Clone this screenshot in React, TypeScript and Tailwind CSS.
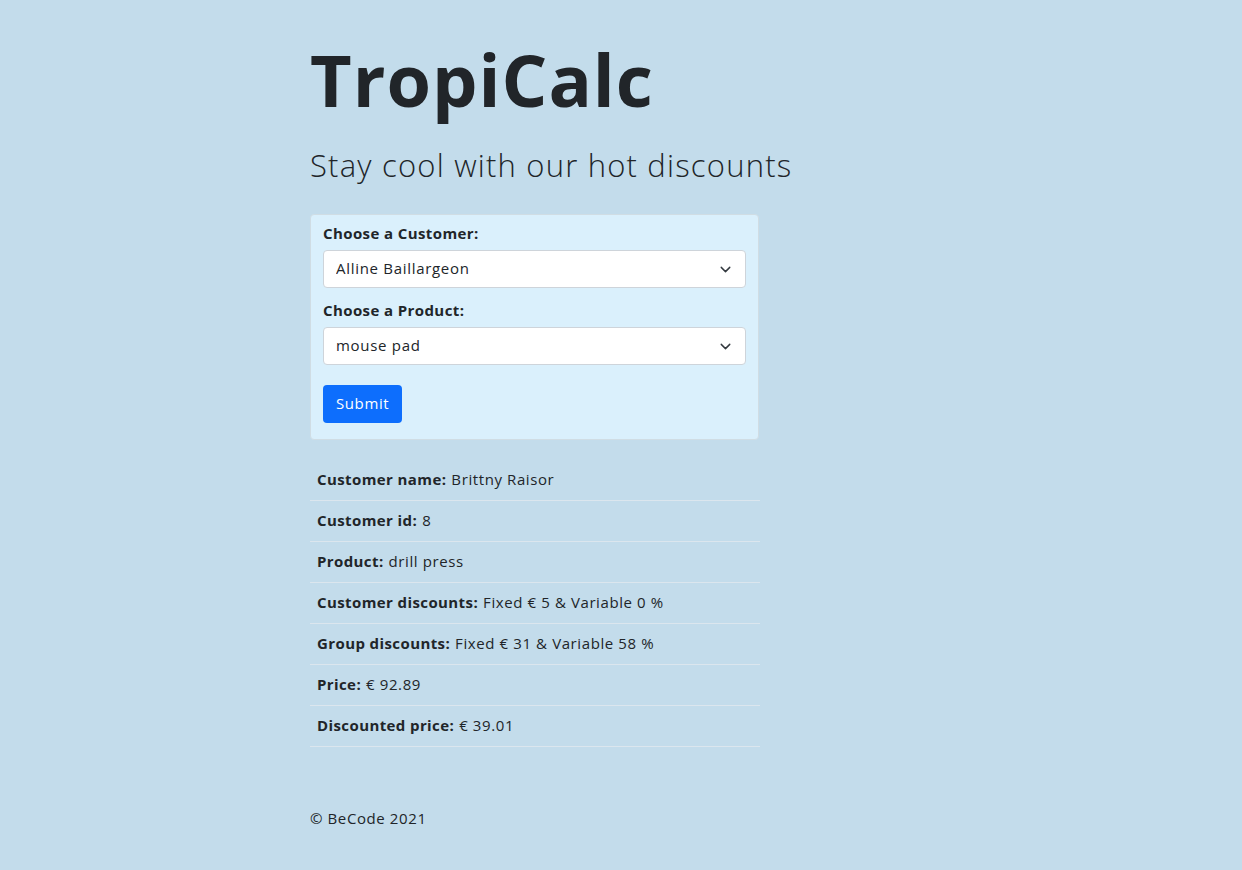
import { ChevronDown } from "lucide-react";

const customers = ["Alline Baillargeon", "Brittny Raisor"];
const products = ["mouse pad", "drill press"];

const rows = [
  { label: "Customer name:", value: "Brittny Raisor" },
  { label: "Customer id:", value: "8" },
  { label: "Product:", value: "drill press" },
  { label: "Customer discounts:", value: "Fixed € 5 & Variable 0 %" },
  { label: "Group discounts:", value: "Fixed € 31 & Variable 58 %" },
  { label: "Price:", value: "€ 92.89" },
  { label: "Discounted price:", value: "€ 39.01" },
];

function Select({ label, options }: { label: string; options: string[] }) {
  return (
    <div className="flex flex-col">
      <label className="font-bold text-[15px] leading-[22px] mb-[6px] tracking-[0.4px]">{label}</label>
      <div className="relative">
        <select className="appearance-none w-full h-[38px] bg-white border border-[#ced4da] rounded-[4px] pl-[12px] pr-10 text-[15px] tracking-[0.7px] text-[#212529] outline-none">
          {options.map((o) => (
            <option key={o}>{o}</option>
          ))}
        </select>
        <ChevronDown
          className="absolute right-[12px] top-[11px] pointer-events-none text-[#343a40]"
          size={17}
          strokeWidth={2}
        />
      </div>
    </div>
  );
}

export default function App() {
  return (
    <div
      className="min-h-[870px] bg-[#c3dceb] text-[#212529]"
      style={{ fontFamily: '"Open Sans", "Noto Sans", sans-serif' }}
    >
      <div className="w-[622px] mx-auto pt-[36px]">
        <h1 className="text-[72px] font-bold leading-[1.2] tracking-[1px]">TropiCalc</h1>
        <h2 className="text-[31px] font-light leading-[1.2] mt-[25px] mb-[29px] tracking-[1.2px]">
          Stay cool with our hot discounts
        </h2>

        <form className="w-[449px] bg-[#daf0fc] border border-[#d0dde4] rounded-[4px] px-[12px] pt-[7px] pb-[16px] flex flex-col">
          <div className="flex flex-col gap-[11px]">
            <Select label="Choose a Customer:" options={customers} />
            <Select label="Choose a Product:" options={products} />
          </div>
          <div className="mt-[20px]">
            <button
              type="button"
              className="h-[38px] px-[13px] bg-[#0d6efd] text-white text-[15px] tracking-[0.6px] rounded-[4px]"
            >
              Submit
            </button>
          </div>
        </form>

        <ul className="w-[450px] mt-[20px]">
          {rows.map((r) => (
            <li
              key={r.label}
              className="h-[41px] flex items-center px-[7px] border-b border-[#dbe6ee] text-[15px] tracking-[0.6px]"
            >
              <span className="font-bold mr-[5px] tracking-[0.4px]">{r.label}</span>
              <span>{r.value}</span>
            </li>
          ))}
        </ul>

        <footer className="mt-[60px] text-[15px] tracking-[0.6px]">© BeCode 2021</footer>
      </div>
    </div>
  );
}
